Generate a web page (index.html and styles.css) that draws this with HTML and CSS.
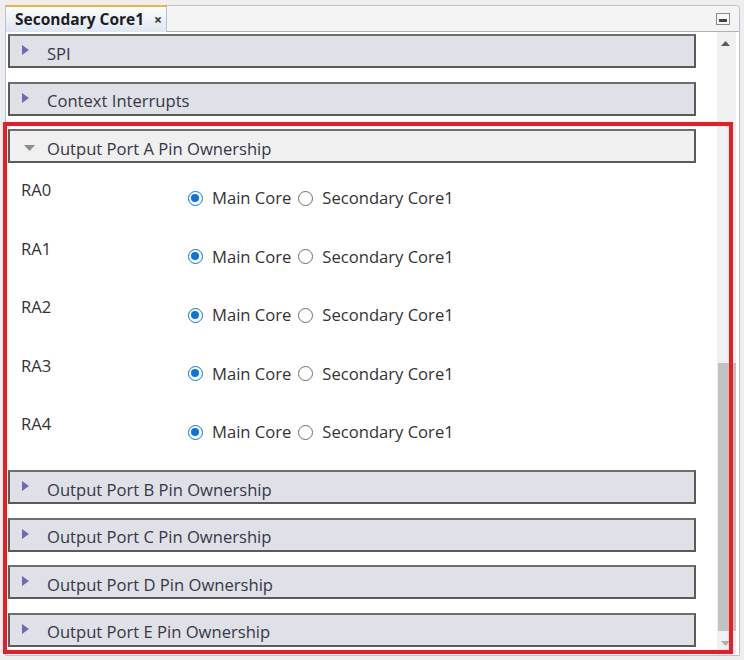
FILE: index.html
```html
<!DOCTYPE html>
<html>
<head>
<meta charset="utf-8">
<link rel="stylesheet" href="styles.css">
</head>
<body>
<div class="panel">
  <div class="tabstrip">
    <div class="tab"><span class="tab-title">Secondary Core1</span><span class="tab-close">×</span></div>
    <div class="tab-fill"></div>
    <div class="minbtn"><span class="minbar"></span></div>
  </div>
  <div class="body">
    <div class="main">
      <div class="sect collapsed"><svg class="tri-r" width="7" height="10" viewBox="0 0 7 10"><polygon points="0,0 7,5 0,10" fill="#6c6cb4"/></svg><span class="sect-title">SPI</span></div>
      <div class="sect collapsed"><svg class="tri-r" width="7" height="10" viewBox="0 0 7 10"><polygon points="0,0 7,5 0,10" fill="#6c6cb4"/></svg><span class="sect-title">Context Interrupts</span></div>
      <div class="sect expanded"><svg class="tri-d" width="11" height="6" viewBox="0 0 11 6"><polygon points="0,0 11,0 5.5,6" fill="#8c8c8c"/></svg><span class="sect-title">Output Port A Pin Ownership</span></div>
      <div class="rows">
        <div class="row"><span class="pin">RA0</span><div class="opts"><span class="radio on"></span><span class="opt">Main Core</span><span class="radio"></span><span class="opt">Secondary Core1</span></div></div>
        <div class="row"><span class="pin">RA1</span><div class="opts"><span class="radio on"></span><span class="opt">Main Core</span><span class="radio"></span><span class="opt">Secondary Core1</span></div></div>
        <div class="row"><span class="pin">RA2</span><div class="opts"><span class="radio on"></span><span class="opt">Main Core</span><span class="radio"></span><span class="opt">Secondary Core1</span></div></div>
        <div class="row"><span class="pin">RA3</span><div class="opts"><span class="radio on"></span><span class="opt">Main Core</span><span class="radio"></span><span class="opt">Secondary Core1</span></div></div>
        <div class="row"><span class="pin">RA4</span><div class="opts"><span class="radio on"></span><span class="opt">Main Core</span><span class="radio"></span><span class="opt">Secondary Core1</span></div></div>
      </div>
      <div class="sect collapsed"><svg class="tri-r" width="7" height="10" viewBox="0 0 7 10"><polygon points="0,0 7,5 0,10" fill="#6c6cb4"/></svg><span class="sect-title">Output Port B Pin Ownership</span></div>
      <div class="sect collapsed"><svg class="tri-r" width="7" height="10" viewBox="0 0 7 10"><polygon points="0,0 7,5 0,10" fill="#6c6cb4"/></svg><span class="sect-title">Output Port C Pin Ownership</span></div>
      <div class="sect collapsed"><svg class="tri-r" width="7" height="10" viewBox="0 0 7 10"><polygon points="0,0 7,5 0,10" fill="#6c6cb4"/></svg><span class="sect-title">Output Port D Pin Ownership</span></div>
      <div class="sect collapsed"><svg class="tri-r" width="7" height="10" viewBox="0 0 7 10"><polygon points="0,0 7,5 0,10" fill="#6c6cb4"/></svg><span class="sect-title">Output Port E Pin Ownership</span></div>
    </div>
    <div class="scrollbar">
      <svg class="arrow-up" width="9" height="5" viewBox="0 0 9 5"><polygon points="0,5 9,5 4.5,0" fill="#5a5a5a"/></svg>
      <div class="track"><div class="thumb"></div></div>
      <svg class="arrow-down" width="9" height="5" viewBox="0 0 9 5"><polygon points="0,0 9,0 4.5,5" fill="#b0b0b0"/></svg>
    </div>
  </div>
</div>
<div class="highlight"></div>
</body>
</html>
```
FILE: styles.css
```css
html, body {
  margin: 0;
  padding: 0;
}
body {
  background: #eeeeee;
  width: 744px;
  height: 660px;
  position: relative;
  overflow: hidden;
  font-family: "Open Sans", "Noto Sans", sans-serif;
  color: #333333;
}
.panel {
  position: relative;
  margin: 5px 0 0 5px;
  width: 733px;
  height: 649px;
  border: 1px solid #b7c3d3;
  border-radius: 0 4px 0 0;
  background: #ffffff;
  display: flex;
  flex-direction: column;
}
.tabstrip {
  height: 25px;
  display: flex;
  align-items: stretch;
  background: #f4f4f4;
  border-bottom: 1px solid #a9b2bf;
  border-radius: 0 4px 0 0;
}
.tab {
  margin: -1px 0 -1px -1px;
  width: 162px;
  box-sizing: border-box;
  border-top: 2px solid #f5b13c;
  border-left: 1px solid #b7c3d3;
  border-right: 1px solid #b7c3d3;
  background: linear-gradient(#fbfcfe, #dfe6f0);
  display: flex;
  align-items: center;
  padding: 0 0 1px 9px;
  font-weight: bold;
  font-size: 15.5px;
  color: #1e1e1e;
}
.tab-title {
  letter-spacing: 0;
}
.tab-close {
  margin-left: 10px;
  font-size: 14px;
  color: #333;
}
.tab-fill {
  flex: 1;
}
.minbtn {
  width: 12px;
  height: 10px;
  border: 1px solid #8a8a8a;
  background: #f8f8f8;
  margin: 7px 9px 0 0;
  position: relative;
}
.minbar {
  position: absolute;
  left: 2px;
  right: 2px;
  bottom: 2px;
  height: 3px;
  background: #444;
}
.body {
  flex: 1;
  display: flex;
  min-height: 0;
}
.main {
  width: 711px;
  padding: 2px 0 0 2px;
  box-sizing: border-box;
  display: flex;
  flex-direction: column;
}
.sect {
  width: 688px;
  height: 34px;
  flex: none;
  box-sizing: border-box;
  border: 2px solid #5a5a5a;
  border-top-color: #6e6e6e;
  background: #dfe1e6;
  display: flex;
  align-items: center;
  margin-bottom: 13.5px;
  font-size: 16.6px;
}
.sect.expanded {
  background: #f0f0f0;
  margin-bottom: 0;
}
.tri-r {
  margin: 0 0 0 12px;
  position: relative;
  top: -1px;
}
.tri-d {
  margin: 0 0 0 14px;
  position: relative;
  top: 2px;
}
.sect-title {
  position: relative;
  top: 2px;
  color: #36364a;
}
.tri-r + .sect-title {
  margin-left: 18px;
}
.tri-d + .sect-title {
  margin-left: 12px;
}
.rows {
  padding-top: 6px;
  height: 307px;
  flex: none;
  box-sizing: border-box;
}
.row {
  height: 58.5px;
  display: flex;
  align-items: flex-start;
  font-size: 16.6px;
}
.pin {
  width: 167px;
  padding-left: 13px;
  margin-top: 10px;
  line-height: 22px;
}
.opts {
  margin-top: 18px;
  display: flex;
  align-items: center;
  line-height: 22px;
}
.radio {
  width: 15px;
  height: 15px;
  box-sizing: border-box;
  border: 1px solid #6e6e6e;
  border-radius: 50%;
  background: #fff;
  margin-right: 9px;
  position: relative;
}
.radio.on {
  border: 1.5px solid #0a74e0;
}
.radio.on::after {
  content: "";
  position: absolute;
  left: 2px;
  top: 2px;
  width: 8px;
  height: 8px;
  border-radius: 50%;
  background: #0a74e0;
}
.opt {
  margin-right: 7px;
}
.scrollbar {
  width: 19px;
  background: #f0f0f0;
  display: flex;
  flex-direction: column;
  align-items: center;
}
.arrow-up {
  margin-top: 9px;
  margin-left: -2px;
}
.track {
  flex: 1;
  width: 100%;
  position: relative;
}
.thumb {
  position: absolute;
  left: 1px;
  right: 0;
  top: 317px;
  bottom: 10px;
  background: #c2c2c2;
}
.arrow-down {
  margin-bottom: 9px;
  margin-left: -2px;
}
.highlight {
  position: absolute;
  left: 3px;
  top: 122px;
  width: 722px;
  height: 524px;
  border: 4px solid #ed1c24;
}
```
